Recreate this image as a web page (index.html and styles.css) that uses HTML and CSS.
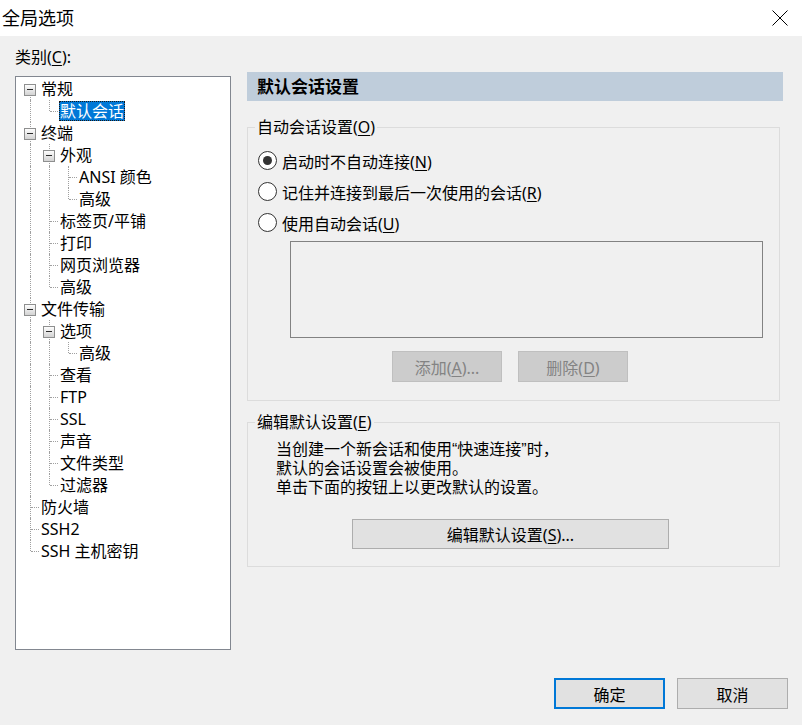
FILE: index.html
```html
<!DOCTYPE html>
<html lang="zh-CN">
<head>
<meta charset="utf-8">
<title>全局选项</title>
<link rel="stylesheet" href="styles.css">
</head>
<body>
<div class="dialog">
  <div class="titlebar">
    <span class="title">全局选项</span>
    <svg class="close" width="16" height="16" viewBox="0 0 16 16"><path d="M0.5 0.5 L15.5 15.5 M15.5 0.5 L0.5 15.5" stroke="#000" stroke-width="1" fill="none"/></svg>
  </div>
  <div class="main">
    <div class="left">
      <div class="cat-label">类别(<u>C</u>):</div>
      <div class="tree">
        <div class="row"><span class="c bx down"><i></i></span><span class="lbl">常规</span></div>
        <div class="row"><span class="c v"></span><span class="c l"></span><span class="lbl sel">默认会话</span></div>
        <div class="row"><span class="c bx up down"><i></i></span><span class="lbl">终端</span></div>
        <div class="row"><span class="c v"></span><span class="c bx up down"><i></i></span><span class="lbl">外观</span></div>
        <div class="row"><span class="c v"></span><span class="c v"></span><span class="c t"></span><span class="lbl">ANSI 颜色</span></div>
        <div class="row"><span class="c v"></span><span class="c v"></span><span class="c l"></span><span class="lbl">高级</span></div>
        <div class="row"><span class="c v"></span><span class="c t"></span><span class="lbl">标签页/平铺</span></div>
        <div class="row"><span class="c v"></span><span class="c t"></span><span class="lbl">打印</span></div>
        <div class="row"><span class="c v"></span><span class="c t"></span><span class="lbl">网页浏览器</span></div>
        <div class="row"><span class="c v"></span><span class="c l"></span><span class="lbl">高级</span></div>
        <div class="row"><span class="c bx up down"><i></i></span><span class="lbl">文件传输</span></div>
        <div class="row"><span class="c v"></span><span class="c bx up down"><i></i></span><span class="lbl">选项</span></div>
        <div class="row"><span class="c v"></span><span class="c v"></span><span class="c l"></span><span class="lbl">高级</span></div>
        <div class="row"><span class="c v"></span><span class="c t"></span><span class="lbl">查看</span></div>
        <div class="row"><span class="c v"></span><span class="c t"></span><span class="lbl">FTP</span></div>
        <div class="row"><span class="c v"></span><span class="c t"></span><span class="lbl">SSL</span></div>
        <div class="row"><span class="c v"></span><span class="c t"></span><span class="lbl">声音</span></div>
        <div class="row"><span class="c v"></span><span class="c t"></span><span class="lbl">文件类型</span></div>
        <div class="row"><span class="c v"></span><span class="c l"></span><span class="lbl">过滤器</span></div>
        <div class="row"><span class="c t"></span><span class="lbl">防火墙</span></div>
        <div class="row"><span class="c t"></span><span class="lbl">SSH2</span></div>
        <div class="row"><span class="c l"></span><span class="lbl">SSH 主机密钥</span></div>
      </div>
    </div>
    <div class="right">
      <div class="panel-head">默认会话设置</div>
      <fieldset class="group g1">
        <legend>自动会话设置(<u>O</u>)</legend>
        <div class="g1-body">
          <div class="radio"><span class="rb checked"></span><span>启动时不自动连接(<u>N</u>)</span></div>
          <div class="radio"><span class="rb"></span><span>记住并连接到最后一次使用的会话(<u>R</u>)</span></div>
          <div class="radio"><span class="rb"></span><span>使用自动会话(<u>U</u>)</span></div>
          <div class="listbox"></div>
          <div class="btnrow">
            <button class="btn disabled">添加(<u>A</u>)...</button>
            <button class="btn disabled">删除(<u>D</u>)</button>
          </div>
        </div>
      </fieldset>
      <fieldset class="group g2">
        <legend>编辑默认设置(<u>E</u>)</legend>
        <div class="g2-body">
          <p class="desc">当创建一个新会话和使用“快速连接”时，<br>默认的会话设置会被使用。<br>单击下面的按钮上以更改默认的设置。</p>
          <button class="btn edit">编辑默认设置(<u>S</u>)...</button>
        </div>
      </fieldset>
    </div>
  </div>
  <div class="footer">
    <button class="btn foot default">确定</button>
    <button class="btn foot">取消</button>
  </div>
</div>
</body>
</html>
```
FILE: styles.css
```css
* { box-sizing: border-box; }
html, body { margin: 0; padding: 0; }
body {
  background: #f0f0f0;
  font-family: "Noto Sans", "Noto Sans CJK SC", sans-serif;
  font-size: 16px;
  color: #000;
}
u { text-decoration: underline; text-underline-offset: 2px; }

.dialog {
  width: 802px;
  height: 725px;
  display: flex;
  flex-direction: column;
}

.titlebar {
  height: 36px;
  background: #fff;
  display: flex;
  align-items: center;
  justify-content: space-between;
  padding-left: 2px;
}
.title { font-size: 18px; line-height: 36px; }
.close { margin-right: 14px; display: block; }

.main {
  display: flex;
  gap: 16px;
  padding-left: 15px;
}
.left {
  width: 216px;
  padding-top: 11px;
}
.cat-label { line-height: 20px; height: 20px; }
.tree {
  margin-top: 9px;
  height: 574px;
  background: #fff;
  border: 1px solid #828790;
  padding: 1px 0 0 5px;
}
.row {
  display: flex;
  height: 22px;
}
.c {
  position: relative;
  width: 19px;
  flex: none;
}
.v::before, .t::before {
  content: "";
  position: absolute;
  left: 9px; top: 0; bottom: 0;
  border-left: 1px dotted #a0a0a0;
}
.l::before, .bx.up::before {
  content: "";
  position: absolute;
  left: 9px; top: 0; height: 11px;
  border-left: 1px dotted #a0a0a0;
}
.t::after, .l::after {
  content: "";
  position: absolute;
  left: 10px; width: 8px; top: 11px;
  border-top: 1px dotted #a0a0a0;
}
.bx.down::after {
  content: "";
  position: absolute;
  left: 9px; top: 11px; bottom: 0;
  border-left: 1px dotted #a0a0a0;
}
.bx i {
  position: absolute;
  z-index: 1;
  left: 3px; top: 6px;
  width: 12px; height: 12px;
  border: 1px solid #8e8f8f;
  background: linear-gradient(#fdfdfd, #d3d3d3);
}
.bx i::after {
  content: "";
  position: absolute;
  left: 2px; right: 2px; top: 4px;
  height: 1px;
  background: #2b2b2b;
}
.lbl {
  line-height: 20px;
  height: 20px;
  margin-top: 1px;
  padding: 0 1px;
  white-space: nowrap;
}
.lbl.sel {
  background: #0078d7;
  color: #fff;
  outline: 1px dotted #1a1a1a;
  outline-offset: -1px;
}

.right {
  width: 536px;
  padding-top: 36px;
}
.panel-head {
  height: 29px;
  line-height: 29px;
  background: #bfcddb;
  padding-left: 10px;
  font-size: 17px;
  font-weight: bold;
}
.group {
  margin: 0;
  padding: 0;
  width: 533px;
  border: 1px solid #dcdcdc;
  min-width: 0;
}
.group legend {
  margin-left: 7px;
  padding: 0 2px;
  line-height: 20px;
  height: 20px;
}
.g1 { margin-top: 16px; }
.g1-body { padding: 8px 0 18px 0; }
.radio {
  display: flex;
  align-items: center;
  gap: 5px;
  height: 31px;
  padding-left: 10px;
}
.rb {
  width: 19px; height: 19px;
  border: 1px solid #333;
  border-radius: 50%;
  background: #fff;
  display: flex;
  align-items: center;
  justify-content: center;
  flex: none;
}
.rb.checked::after {
  content: "";
  width: 9px; height: 9px;
  border-radius: 50%;
  background: #333;
}
.listbox {
  margin: 3px 0 0 42px;
  width: 473px;
  height: 97px;
  border: 1px solid #828282;
  background: #f0f0f0;
}
.btnrow {
  display: flex;
  gap: 16px;
  margin: 13px 0 0 144px;
}
.btn {
  font: inherit;
  padding: 0;
  margin: 0;
  background: #e1e1e1;
  border: 1px solid #adadad;
  color: #000;
  height: 31px;
}
.btn.disabled {
  width: 110px;
  background: #cccccc;
  border-color: #bfbfbf;
  color: #838383;
}
.g2 { margin-top: 11px; }
.g2-body { padding: 8px 0 17px 0; }
.desc {
  margin: 0 0 0 28px;
  font-family: "Liberation Sans", "Noto Sans CJK SC", sans-serif;
  line-height: 19px;
}
.btn.edit {
  display: block;
  margin: 22px 0 0 104px;
  width: 317px;
  height: 30px;
}

.footer {
  margin-top: auto;
  display: flex;
  justify-content: flex-end;
  gap: 12px;
  padding: 0 14px 16px 0;
}
.btn.foot { width: 111px; }
.btn.default { border: 2px solid #0078d7; }
```
